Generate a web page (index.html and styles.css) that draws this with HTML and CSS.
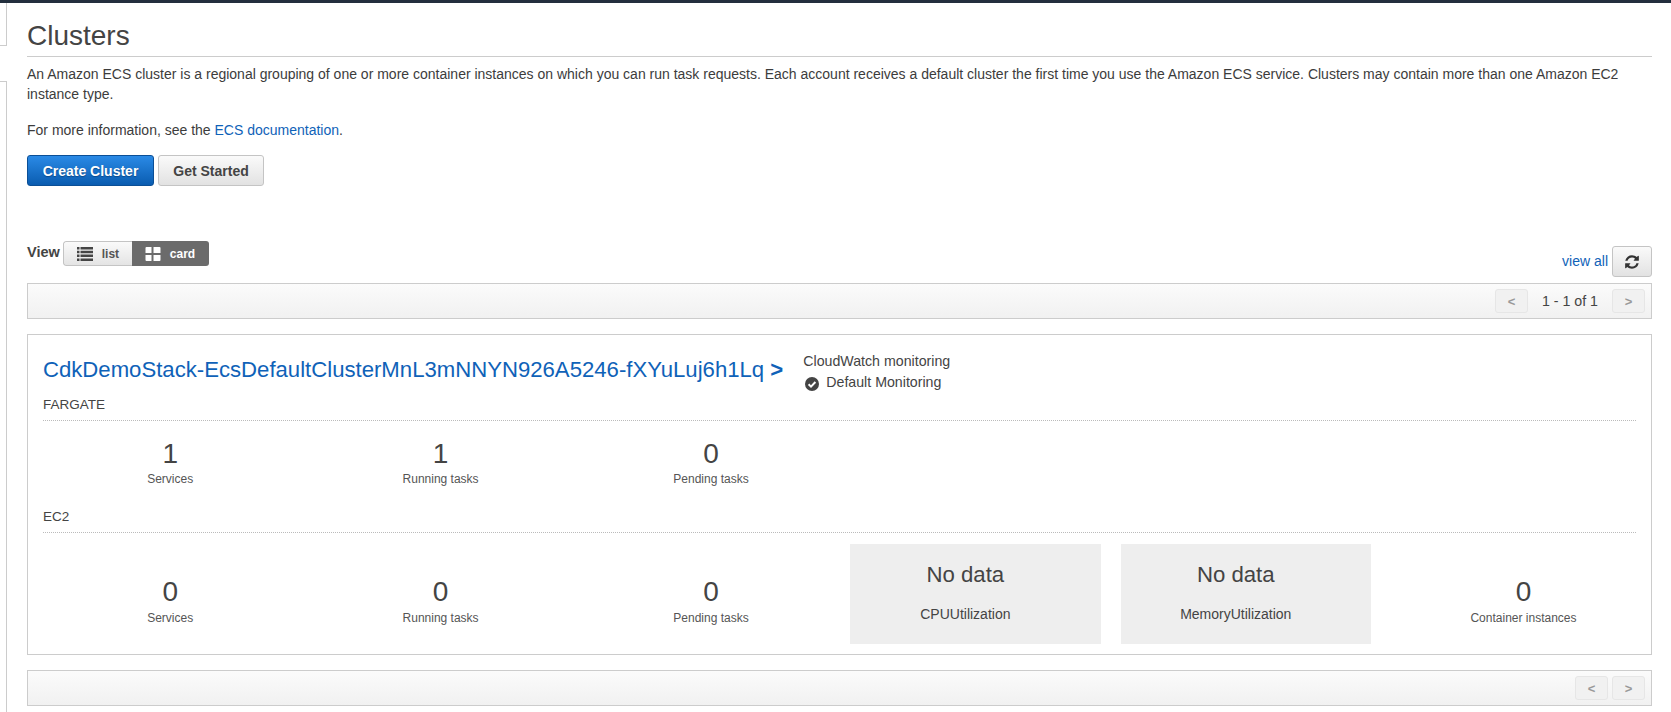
FILE: index.html

```html
<!DOCTYPE html>
<html>
<head>
<meta charset="utf-8">
<title>Clusters</title>
<link rel="stylesheet" href="styles.css">
</head>
<body>
<div class="topbar"></div>
<div class="layout">
	<div class="sidenav">
		<div class="navbox navbox-first"></div>
		<div class="navbox navbox-second"></div>
	</div>
	<div class="content">
		<h1 class="title">Clusters</h1>
		<p class="intro">An Amazon ECS cluster is a regional grouping of one or more container instances on which you can run task requests. Each account receives a default cluster the first time you use the Amazon ECS service. Clusters may contain more than one Amazon EC2 instance type.</p>
		<p class="moreinfo">For more information, see the <a href="#">ECS documentation</a>.</p>
		<div class="actions">
			<button class="btn btn-primary">Create Cluster</button>
			<button class="btn btn-default">Get Started</button>
		</div>
		<div class="viewrow">
			<div class="viewpick">
				<span class="viewlabel">View</span>
				<div class="segment">
					<span class="seg seg-list">
						<svg class="seg-icon" viewBox="0 0 16 14"><path d="M0 0h2.5v2.5H0zM3.5 0H16v2.5H3.5zM0 3.8h2.5v2.5H0zM3.5 3.8H16v2.5H3.5zM0 7.6h2.5v2.5H0zM3.5 7.6H16v2.5H3.5zM0 11.4h2.5v2.5H0zM3.5 11.4H16v2.5H3.5z" fill="#444"/></svg>
						list
					</span>
					<span class="seg seg-card">
						<svg class="seg-icon" viewBox="0 0 15 14"><path d="M0 1a1 1 0 0 1 1-1h5v6H0zM8 0h6a1 1 0 0 1 1 1v5H8zM0 8h6v6H1a1 1 0 0 1-1-1zM8 8h7v5a1 1 0 0 1-1 1H8z" fill="#fff"/></svg>
						card
					</span>
				</div>
			</div>
			<div class="viewtools">
				<a href="#" class="viewall">view all</a>
				<button class="btn btn-default btn-refresh">
					<svg class="refresh-icon" viewBox="0 0 1792 1792"><path fill="#333" d="M1639 1056q0 5-1 7-64 268-268 434.5t-478 166.5q-146 0-282.5-55t-243.5-157l-129 129q-19 19-45 19t-45-19-19-45v-448q0-26 19-45t45-19h448q26 0 45 19t19 45-19 45l-137 137q71 66 161 102t187 36q134 0 250-65t186-179q11-17 53-117 8-23 30-23h192q13 0 22.5 9.5t9.5 22.5zm25-800v448q0 26-19 45t-45 19h-448q-26 0-45-19t-19-45 19-45l138-138q-148-137-349-137-134 0-250 65t-186 179q-11 17-53 117-8 23-30 23h-199q-13 0-22.5-9.5t-9.5-22.5v-7q65-268 270-434.5t480-166.5q146 0 284 55.5t245 156.5l130-129q19-19 45-19t45 19 19 45z"/></svg>
				</button>
			</div>
		</div>
		<div class="pagerbar pagerbar-top">
			<span class="pagebtn">&lt;</span>
			<span class="pagecount">1 - 1 of 1</span>
			<span class="pagebtn">&gt;</span>
		</div>
		<div class="card">
			<div class="cardhead">
				<a href="#" class="clustername">CdkDemoStack-EcsDefaultClusterMnL3mNNYN926A5246-fXYuLuj6h1Lq <b>&gt;</b></a>
				<div class="monitoring">
					<div>CloudWatch monitoring</div>
					<div class="monitor-state">
						<svg class="check-icon" viewBox="0 0 14 14"><circle cx="7" cy="7" r="7" fill="#444"/><path d="M3.6 7.2l2.4 2.4 4.4-4.6" fill="none" stroke="#fff" stroke-width="2"/></svg>
						Default Monitoring
					</div>
				</div>
			</div>
			<div class="launchtype">FARGATE</div>
			<div class="metrics metrics-fargate">
				<div class="metric"><div class="num">1</div><div class="cap">Services</div></div>
				<div class="metric"><div class="num">1</div><div class="cap">Running tasks</div></div>
				<div class="metric"><div class="num">0</div><div class="cap">Pending tasks</div></div>
			</div>
			<div class="launchtype">EC2</div>
			<div class="metrics metrics-ec2">
				<div class="metric"><div class="num">0</div><div class="cap">Services</div></div>
				<div class="metric"><div class="num">0</div><div class="cap">Running tasks</div></div>
				<div class="metric"><div class="num">0</div><div class="cap">Pending tasks</div></div>
				<div class="nodata"><div class="nodata-text">No data</div><div class="nodata-cap">CPUUtilization</div></div>
				<div class="nodata"><div class="nodata-text">No data</div><div class="nodata-cap">MemoryUtilization</div></div>
				<div class="metric"><div class="num">0</div><div class="cap">Container instances</div></div>
			</div>
		</div>
		<div class="pagerbar pagerbar-bottom">
			<span class="pagebtn">&lt;</span>
			<span class="pagebtn">&gt;</span>
		</div>
	</div>
</div>
</body>
</html>
```

FILE: styles.css

```css
HTML, BODY {
	margin:0px;
	padding:0px;
	height:100%;
	overflow:hidden;
}

BODY {
	background:#fff;
	color:#444;
	font-family:"Liberation Sans", Arial, sans-serif;
	font-size:14px;
}

A {
	color:#0f62b8;
	text-decoration:none;
}

.topbar {
	height:3px;
	background:#232f3e;
}

.layout {
	display:flex;
}

.sidenav {
	width:7px;
	flex:none;
}

.navbox {
	border-right:1px solid #ccc;
}

.navbox-first {
	height:42px;
	border-bottom:1px solid #ccc;
}

.navbox-second {
	height:640px;
	margin-top:35px;
	border-top:1px solid #ccc;
}

.content {
	width:1625px;
	margin-left:20px;
	flex:none;
}

.title {
	margin:0px;
	height:54px;
	box-sizing:border-box;
	padding-top:17px;
	border-bottom:1px solid #ccc;
	font-size:28px;
	line-height:32px;
	font-weight:normal;
	color:#444;
}

.intro {
	margin:7px 0px 0px 0px;
	line-height:20px;
	color:#3c3c3c;
}

.moreinfo {
	margin:16px 0px 0px 0px;
	line-height:21px;
	color:#3c3c3c;
}

.actions {
	display:flex;
	gap:4px;
	margin-top:14px;
}

.btn {
	font-family:inherit;
	font-size:14px;
	font-weight:bold;
	border-radius:3px;
	padding:0px;
	height:31px;
	box-sizing:border-box;
}

.btn-primary {
	width:127px;
	color:#fff;
	background:linear-gradient(#2a8ae6, #0a5cb0);
	border:1px solid #0b4f96;
	text-shadow:0px 1px 1px #0a4a8c;
}

.btn-default {
	width:106px;
	color:#444;
	background:linear-gradient(#fafafa, #e2e2e2);
	border:1px solid #c4c4c4;
}

.viewrow {
	display:flex;
	justify-content:space-between;
	align-items:flex-start;
	height:42px;
	margin-top:55px;
}

.viewpick {
	display:flex;
	align-items:center;
	gap:3px;
	height:25px;
}

.viewlabel {
	font-weight:bold;
	font-size:14.5px;
	color:#444;
	margin-top:-3px;
}

.segment {
	display:flex;
	height:25px;
	border-radius:3px;
	overflow:hidden;
	font-size:12px;
	font-weight:bold;
}

.seg {
	display:flex;
	align-items:center;
	box-sizing:border-box;
	gap:9px;
}

.seg-list {
	width:69px;
	padding-left:13px;
	color:#555;
	background:linear-gradient(#fafafa, #e4e4e4);
	border:1px solid #c4c4c4;
	border-right:0px;
	border-radius:3px 0px 0px 3px;
}

.seg-card {
	width:77px;
	padding-left:13px;
	color:#fff;
	background:#6b6b6b;
}

.seg-icon {
	width:16px;
	height:14px;
}

.viewtools {
	display:flex;
	align-items:center;
	gap:4px;
	margin-top:5px;
}

.viewall {
	font-size:14px;
	margin-top:-2px;
}

.btn-refresh {
	width:40px;
	display:flex;
	align-items:center;
	justify-content:center;
}

.refresh-icon {
	width:16px;
	height:16px;
}

.pagerbar {
	display:flex;
	align-items:center;
	justify-content:flex-end;
	height:36px;
	box-sizing:border-box;
	border:1px solid #ccc;
	padding-right:6px;
	background:linear-gradient(#fbfbfb, #f1f1f1);
}

.pagebtn {
	width:33px;
	height:24px;
	display:flex;
	align-items:center;
	justify-content:center;
	box-sizing:border-box;
	border:1px solid #e6e6e6;
	border-radius:3px;
	background:#f1f1f1;
	color:#999;
	font-weight:bold;
	font-size:13px;
}

.pagecount {
	width:84px;
	text-align:center;
	color:#444;
	font-size:14.2px;
}

.pagerbar-bottom {
	gap:4px;
	margin-top:15px;
}

.card {
	margin-top:15px;
	height:321px;
	box-sizing:border-box;
	border:1px solid #ccc;
	padding:0px 15px;
}

.cardhead {
	display:flex;
	align-items:flex-start;
	height:58px;
	padding-top:18px;
	box-sizing:border-box;
}

.clustername {
	font-size:22.15px;
	line-height:34px;
	white-space:nowrap;
}

.monitoring {
	margin:-2px 0px 0px 20px;
	line-height:21px;
	font-size:14.2px;
	color:#444;
}

.monitor-state {
	display:flex;
	align-items:center;
	gap:7px;
	margin-left:2px;
}

.check-icon {
	width:14px;
	height:14px;
	margin-top:3px;
}

.launchtype {
	font-size:13.5px;
	line-height:18px;
	padding-bottom:6px;
	border-bottom:1px dotted #bbb;
	margin-top:3px;
	color:#444;
}

.metrics {
	display:grid;
	grid-template-columns:repeat(5, 270.4px) 1fr;
	margin:0px -24px 0px -8px;
}

.metrics-fargate {
	height:84px;
}

.metrics-ec2 {
	height:110px;
}

.metric {
	text-align:center;
}

.metrics-fargate .metric {
	padding-top:17px;
}

.metrics-ec2 .metric {
	padding-top:43px;
}

.num {
	font-size:28px;
	line-height:32px;
	color:#444;
}

.cap {
	font-size:12px;
	line-height:16px;
	margin-top:2px;
	color:#555;
}

.metrics-fargate .cap {
	margin-top:1px;
}

.nodata {
	margin:11px 16px 0px 4px;
	height:100px;
	box-sizing:border-box;
	padding-right:20px;
	background:#eee;
	text-align:center;
}

.nodata-text {
	font-size:22.2px;
	line-height:24px;
	padding-top:19px;
}

.nodata-cap {
	font-size:14px;
	line-height:16px;
	margin-top:19px;
}
```
